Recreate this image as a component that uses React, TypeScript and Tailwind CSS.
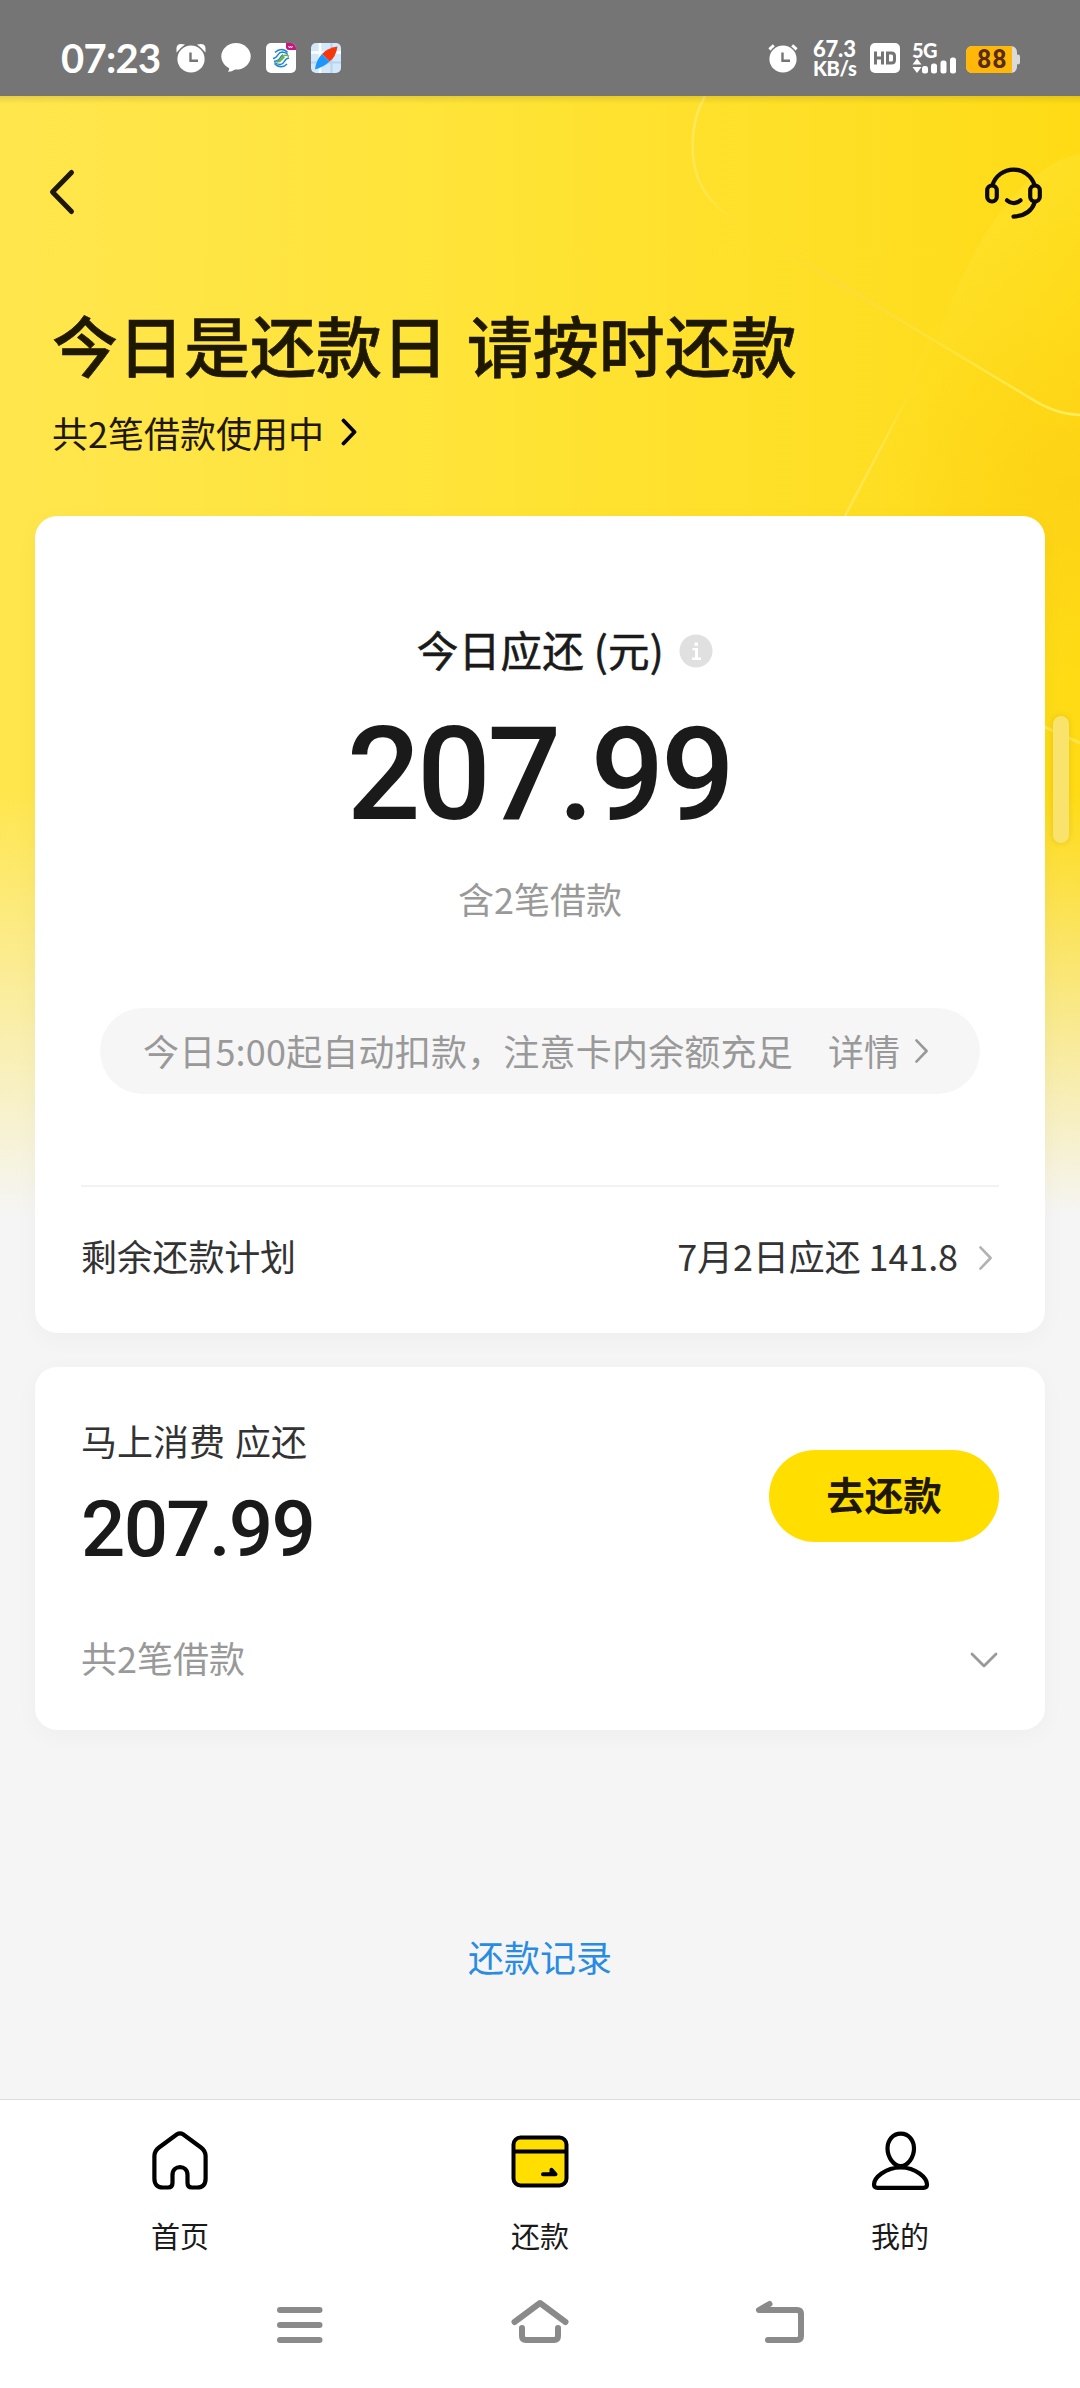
function AlarmIcon({ outlined = false }: { outlined?: boolean }) {
  return (
    <svg className="h-[32px] w-[30px] shrink-0" viewBox="0 0 30 32" fill="none">
      {outlined ? (
        <path d="M1.500 7.500 6 3.500M28.500 7.500 24 3.500" stroke="#fff" strokeWidth="3.400" />
      ) : (
        <path d="M.5 10.500V6Q1 2 5 2L9 2.500ZM29.500 10.500V6Q29 2 25 2L21 2.500Z" fill="#fff" />
      )}
      <circle cx="15" cy="17" r="15" fill="#757575" />
      <circle cx="15" cy="17" r="13.600" fill="#fff" />
      <path d="M14.500 10.500v8.200h7.500" stroke="#757575" strokeWidth="2.400" />
    </svg>
  );
}

function StatusBar() {
  return (
    <div className="relative flex h-[96px] shrink-0 items-center bg-[#757575] pt-[20px] pr-[60px] pl-[61px] text-white">
      <span className="w-[115px] font-[Lato,sans-serif] text-[40px] leading-[40px] font-bold tracking-[-0.700px]">07:23</span>
      <AlarmIcon />
      <svg className="ml-[15px] h-[30px] w-[30px]" viewBox="0 0 30 30">
        <path d="M7 22 8.200 25Q8.300 27.500 7 28.800 10.500 29 14 26.400Z" fill="#fff" />
        <ellipse cx="15" cy="13.300" rx="14.700" ry="13.300" fill="#fff" />
      </svg>
      <svg className="ml-[15px] h-[30px] w-[30px]" viewBox="0 0 30 30" fill="none">
        <rect width="30" height="30" rx="5" fill="#fff" />
        <path d="M20 0h5a5 5 0 0 1 5 5v2h-7a3 3 0 0 1-3-3Z" fill="#c4187c" />
        <path d="m22.500 3 1 2 1-2 1 2 1-2" stroke="#fff" strokeWidth=".8" />
        <path d="M9 9.500Q12 6.500 15.500 6.500T21.500 9.500M8.500 20.500Q11.500 23.800 15 23.800T21 21" stroke="#1e84cf" strokeWidth="1.400" />
        <path d="M7 15.500c5 0 4-6 9-6.500q3 0 6 2.500M8 18.300c7 .5 6-6 9-6.700" stroke="#1e84cf" strokeWidth="1.400" />
        <path d="M23 15c-5 0-4 6-8.500 6.500Q11 21.500 8.500 19.500" stroke="#1e84cf" strokeWidth="1.400" />
        <path d="M11 18.800c5 0 4-5 7-6.300q3-.5 5 .8M10.500 19c5 1 5-3.500 8-5" stroke="#6cb53a" strokeWidth="1.500" />
      </svg>
      <svg className="ml-[15px] h-[30px] w-[30px]" viewBox="0 0 30 30" fill="none">
        <rect width="30" height="30" rx="5" fill="#d3e8fa" />
        <path d="M0 9.500h30M9 0v30" stroke="#fff" strokeWidth="2.500" />
        <path d="M0 19.500h30M20.500 0v30" stroke="#b5d4ee" strokeWidth="2" />
        <path d="M26.500 3.500Q25 14 18.500 18.500L11 11Q16 5 26.500 3.500Z" fill="#f4380c" />
        <path d="M4 26.500Q5 17 11 11l7.500 7.500Q13 24 4 26.500Z" fill="#1e96fb" />
      </svg>
      <div className="ml-auto flex items-center">
        <AlarmIcon outlined />
        <div className="ml-[15px] flex w-[44px] flex-col font-[Lato,sans-serif] font-black">
          <span className="text-[22px] leading-[19px] tracking-[-0.200px]">67.3</span>
          <span className="text-[20px] leading-[20px] tracking-[-0.300px]">KB/s</span>
        </div>
        <svg className="ml-[13px] h-[30px] w-[30px]" viewBox="0 0 30 30" fill="none">
          <rect width="30" height="30" rx="5" fill="#fff" />
          <path d="M5.500 8.500v13M12.500 8.500v13M5.500 15h7M17.500 10h4q3 0 3 3v4q0 3-3 3h-4Z" stroke="#757575" strokeWidth="3" />
        </svg>
        <div className="relative ml-[12px] h-[32px] w-[45px]">
          <span className="absolute top-[-2px] left-0 font-[Lato,sans-serif] text-[20px] leading-[20px] font-black tracking-[-0.500px]">5G</span>
          <svg className="absolute top-0 left-0 h-[32px] w-[45px]" viewBox="0 0 45 32" fill="#fff">
            <path d="m5 16.500 4.500 6h-9ZM5 31l4.500-6h-9Z" />
            <rect x="10" y="24" width="6" height="7.500" rx="2.500" />
            <rect x="19" y="21.500" width="6" height="10" rx="2.500" />
            <rect x="28.500" y="18.500" width="6" height="13" rx="2.500" />
            <rect x="38" y="15.500" width="6" height="16" rx="2.500" />
          </svg>
        </div>
        <div className="relative mt-[3px] ml-[9px] h-[27px] w-[54px]">
          <svg className="absolute inset-0" viewBox="0 0 54 27" width="54" height="27">
            <rect width="51" height="27" rx="6" fill="#dadada" />
            <rect x="50" y="8.500" width="4" height="10" rx="2" fill="#dadada" />
            <path d="M6 0h40v27H6a6 6 0 0 1-6-6V6a6 6 0 0 1 6-6Z" fill="#ffb80a" />
          </svg>
          <span className="absolute top-0 left-[11px] font-[Roboto,sans-serif] text-[25px] leading-[28px] font-bold tracking-[0.800px] text-[#5a2c00]">88</span>
        </div>
      </div>
    </div>
  );
}

function Backdrop() {
  return (
    <div className="absolute inset-x-0 top-[96px] h-[1120px] bg-linear-to-r from-[#ffe64d] via-[#ffe333] to-[#fedb14]">
      <svg className="absolute top-0 right-0 h-[800px] w-[440px]" viewBox="640 96 440 800" fill="none">
        <defs>
          <linearGradient id="curveA" x1="700" y1="96" x2="1080" y2="415" gradientUnits="userSpaceOnUse">
            <stop offset="0" stopColor="#ffe85e" />
            <stop offset=".14" stopColor="#ffe64a" />
            <stop offset=".24" stopColor="#ffe030" stopOpacity="0" />
            <stop offset=".45" stopColor="#ffd83c" stopOpacity=".9" />
            <stop offset=".7" stopColor="#ffe236" />
            <stop offset="1" stopColor="#ffed5c" />
          </linearGradient>
          <linearGradient id="curveB" x1="845" y1="516" x2="915" y2="385" gradientUnits="userSpaceOnUse">
            <stop offset="0" stopColor="#ffe750" />
            <stop offset=".6" stopColor="#ffe444" />
            <stop offset="1" stopColor="#ffe22e" stopOpacity="0" />
          </linearGradient>
          <linearGradient id="sheet" x1="970" y1="250" x2="1080" y2="400" gradientUnits="userSpaceOnUse">
            <stop offset="0" stopColor="#ffe22c" stopOpacity=".6" />
            <stop offset="1" stopColor="#fdd41a" stopOpacity=".3" />
          </linearGradient>
          <radialGradient id="glow" cx="1070" cy="490" r="190" gradientUnits="userSpaceOnUse">
            <stop offset="0" stopColor="#fdd216" stopOpacity=".9" />
            <stop offset="1" stopColor="#fdd216" stopOpacity="0" />
          </radialGradient>
        </defs>
        <path d="M640 300H1080V800H640Z" fill="url(#glow)" />
        <path d="M845 516 940 330Q1000 170 1080 154V417Q1058 415 1030 399L930 338Z" fill="url(#sheet)" />
        <path d="M705 96C688 125 690 165 702 187C712 205 730 219 760 236L1030 398Q1056 415 1082 415" stroke="url(#curveA)" strokeWidth="2.600" />
        <path d="M845 516 907 398 935 345" stroke="url(#curveB)" strokeWidth="2.600" />
        <path d="M1040 725 1080 743" stroke="#ffe648" strokeWidth="3" />
      </svg>
      <div className="absolute inset-x-0 top-0 h-[8px] bg-linear-to-b from-black/10 to-transparent" />
      <div className="absolute inset-x-0 bottom-0 h-[425px] bg-linear-to-b from-[#f5f5f5]/0 to-[#f5f5f5]" />
    </div>
  );
}

function Chevron({ className, width = 3 }: { className: string; width?: number }) {
  return (
    <svg className={className} viewBox="0 0 16 28" fill="none" stroke="currentColor" strokeWidth={width} strokeLinecap="round" strokeLinejoin="round">
      <path d="m2.500 2.500 11 11.500-11 11.500" />
    </svg>
  );
}

function Header() {
  return (
    <header className="relative h-[420px] shrink-0 text-[#1f1800]">
      <div className="flex items-center justify-between pt-[66px] pr-[36px] pl-[49px]">
        <svg className="h-[60px] w-[28px]" viewBox="0 0 28 60" fill="none" stroke="#1f1800" strokeWidth="5" strokeLinecap="round" strokeLinejoin="round">
          <path d="M22.500 10.500 3.500 30l19 19.500" />
        </svg>
        <svg className="h-[60px] w-[60px]" viewBox="0 0 60 60" fill="none" stroke="#0d0900" strokeWidth="4.200" strokeLinecap="round">
          <path d="M8.500 23A22 22 0 0 1 50.500 23" />
          <rect x="3.200" y="23.500" width="9.600" height="16" rx="4.800" />
          <rect x="46.200" y="23.500" width="9.600" height="16" rx="4.800" />
          <path d="M23 38.300q6.500 5.500 13.500 0M50.500 41q-4.500 12.500-21 13.600" />
        </svg>
      </div>
      <h1 className="mt-[81px] pl-[52px] text-[66px] leading-[80px] font-medium whitespace-nowrap [-webkit-text-stroke:0.6px_#1f1800] [word-spacing:4px]">今日是还款日 请按时还款</h1>
      <div className="mt-[29px] flex items-center pl-[52px]">
        <span className="text-[36px] leading-[40px]">共2笔借款使用中</span>
        <Chevron className="ml-[17px] h-[28px] w-[16px] text-black" width={3.8} />
      </div>
    </header>
  );
}

function TodayCard() {
  return (
    <section className="relative mx-[35px] flex h-[817px] shrink-0 flex-col items-center rounded-[22px] bg-white shadow-[0_6px_24px_rgba(0,0,0,0.03)]">
      <div className="mt-[113px] ml-[50px] flex items-center">
        <span className="-mt-[4px] text-[41.500px] leading-[48px] tracking-[0.300px] text-[#1a1a1a] [-webkit-text-stroke:0.600px_#1a1a1a]">今日应还 (元)</span>
        <svg className="ml-[15px] h-[34px] w-[34px]" viewBox="0 0 34 34">
          <circle cx="17" cy="17" r="16.500" fill="#e0e0e0" />
          <path d="M15.500 8.500h3.500v3.200h-3.500ZM13.500 14h5.500v9.500h3V26h-9v-2.500h3V16.200h-2.500Z" fill="#fff" />
        </svg>
      </div>
      <div className="mt-[36px] mr-[2px] font-[Roboto,sans-serif] text-[130px] leading-[131px] font-medium tracking-[-3.500px] text-[#1a1a1a]">207.99</div>
      <div className="mt-[38px] text-[36px] leading-[40px] text-[#999]">含2笔借款</div>
      <div className="mt-[90px] flex h-[86px] w-[880px] shrink-0 items-center rounded-full bg-[#f6f6f6] pl-[43px] text-[36px] leading-[40px] text-[#999]">
        <span className="-mt-[3px] w-[685px] tracking-[0.200px] whitespace-nowrap">今日5:00起自动扣款，注意卡内余额充足</span>
        <span className="-mt-[3px]">详情</span>
        <Chevron className="ml-[14px] h-[26px] w-[15px]" width={2.8} />
      </div>
      <div className="mt-[91px] h-[2px] w-[918px] shrink-0 bg-[#f2f2f2]" />
      <div className="flex w-[918px] flex-1 items-center pb-[5px] text-[36px] leading-[40px] text-[#333]">
        <span className="-mt-[5px] tracking-[-0.200px]">剩余还款计划</span>
        <span className="-mt-[5px] ml-auto tracking-[-0.100px]">7月2日应还 141.8</span>
        <Chevron className="mr-[6px] ml-[20px] h-[26px] w-[15px] text-[#b2b2b2]" width={2.8} />
      </div>
    </section>
  );
}

function LenderCard() {
  return (
    <section className="relative mx-[35px] mt-[34px] h-[363px] shrink-0 rounded-[22px] bg-white pt-[53px] pr-[46px] pl-[46px] shadow-[0_6px_24px_rgba(0,0,0,0.03)]">
      <div className="flex items-start justify-between">
        <div>
          <div className="text-[36px] leading-[40px] text-[#333] [word-spacing:2px]">马上消费 应还</div>
          <div className="mt-[30px] font-[Roboto,sans-serif] text-[78px] leading-[79px] font-medium tracking-[-1.700px] text-[#1a1a1a]">207.99</div>
        </div>
        <button className="mt-[30px] h-[92px] w-[230px] rounded-full bg-[#ffde00] pb-[6px] text-[38.500px] leading-[44px] font-bold text-[#1f1800]">去还款</button>
      </div>
      <div className="mt-[71px] flex items-center justify-between text-[#999]">
        <span className="-mt-[3px] text-[36px] leading-[40px]">共2笔借款</span>
        <svg className="mt-[2px] h-[18px] w-[30px]" viewBox="0 0 30 18" fill="none" stroke="currentColor" strokeWidth="2.800" strokeLinecap="round" strokeLinejoin="round">
          <path d="m3 3 12 12L27 3" />
        </svg>
      </div>
    </section>
  );
}

function TabBar() {
  const label = "mt-[26px] text-[29px] leading-[34px] text-[#1a1a1a]";
  return (
    <nav className="grid h-[170px] shrink-0 grid-cols-3 border-t border-[#dedede] bg-white pt-[30px]">
      <div className="flex flex-col items-center">
        <svg className="h-[62px] w-[60px]" viewBox="0 0 60 62" fill="none" stroke="#000" strokeWidth="4.200" strokeLinejoin="round">
          <path d="M27 4.300Q30 2.300 33 4.300L51 17.500Q55.600 21 55.600 26V48.500Q55.600 57.500 47 57.500H42Q37.500 57.500 37.500 53V45C37.500 34.500 22.500 34.500 22.500 45V53Q22.500 57.500 18 57.500H13Q4.400 57.500 4.400 48.500V26Q4.400 21 9 17.500Z" />
        </svg>
        <span className={label}>首页</span>
      </div>
      <div className="flex flex-col items-center">
        <svg className="h-[62px] w-[60px]" viewBox="0 0 60 62" fill="none" stroke="#000" strokeWidth="4">
          <rect x="3.500" y="7.500" width="53" height="48" rx="7" fill="#ffde00" />
          <path d="M3.500 21.500h53" />
          <path d="M33 44.300h12.500l-4-4.500v4" strokeLinecap="round" strokeLinejoin="round" fill="#000" />
        </svg>
        <span className={label}>还款</span>
      </div>
      <div className="flex flex-col items-center">
        <svg className="h-[62px] w-[60px]" viewBox="0 0 60 62" fill="none" stroke="#000" strokeWidth="4.200" strokeLinejoin="round">
          <path d="M30.800 3.600C39 3.600 44 10.500 44 18.500C44 27 38 36 30.800 36S17.500 27 17.500 18.500C17.500 10.500 22.500 3.600 30.800 3.600Z" />
          <path d="M30.800 37.500C46 37.500 57 48 57 54.500Q57 57.800 53.500 57.800H7.500Q4 57.800 4 54.500C4 48 15 37.500 30.800 37.500Z" />
        </svg>
        <span className={label}>我的</span>
      </div>
    </nav>
  );
}

function SystemNav() {
  return (
    <div className="flex h-[119px] shrink-0 items-start justify-center gap-[180px] bg-white pt-[26px]">
      <svg className="h-[50px] w-[60px]" viewBox="0 0 60 50" fill="none" stroke="#8a8a8a" strokeWidth="6" strokeLinecap="round">
        <path d="M10 15h39.500M10 30h39.500M10 45h39.500" />
      </svg>
      <svg className="h-[50px] w-[60px]" viewBox="0 0 60 50" fill="none" stroke="#8a8a8a" strokeWidth="6" strokeLinecap="round" strokeLinejoin="round">
        <path d="M4.500 27 30 8l25.500 19M12 33v8q0 4 4 4h28q4 0 4-4v-8" />
      </svg>
      <svg className="h-[50px] w-[60px]" viewBox="0 0 60 50" fill="none" stroke="#8a8a8a" strokeWidth="6" strokeLinecap="round" strokeLinejoin="round">
        <path d="M19.500 9 9 15h38q4 0 4 4v22q0 4-4 4H18" />
      </svg>
    </div>
  );
}

export default function App() {
  return (
    <div className={`relative flex h-[2388px] w-[1080px] flex-col overflow-hidden bg-[#f5f5f5] font-["Noto_Sans_CJK_SC",sans-serif]`}>
      <Backdrop />
      <StatusBar />
      <Header />
      <TodayCard />
      <LenderCard />
      <div className="flex flex-1 items-center justify-center pt-[82px] text-[36px] leading-[40px] text-[#2a8be2]">还款记录</div>
      <TabBar />
      <SystemNav />
      <div className="absolute top-[716px] right-[11px] h-[127px] w-[16px] rounded-full bg-[#f9e36c] shadow-[0_0_4px_2px_rgba(190,160,0,0.2)]" />
    </div>
  );
}
